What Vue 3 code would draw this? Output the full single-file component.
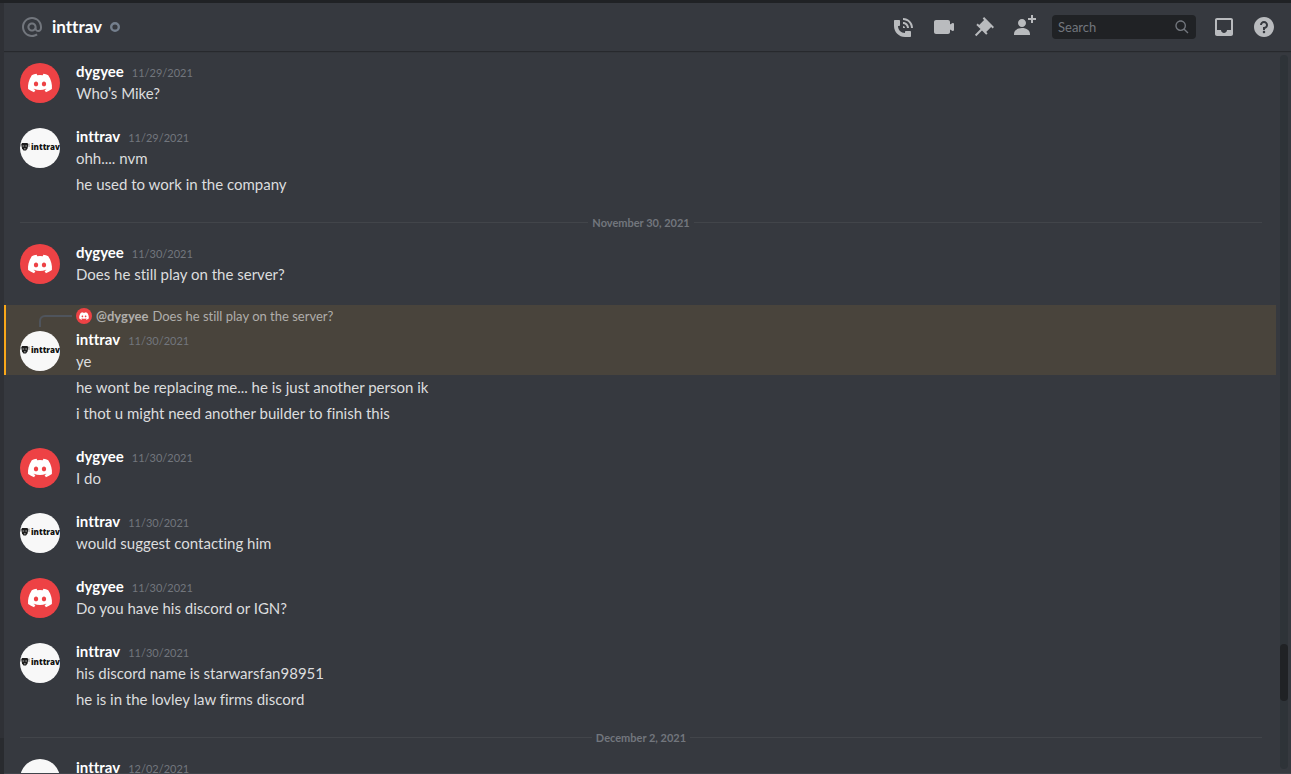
<template>
  <div class="chat">
    <aside class="sidebar-edge"></aside>
    <main class="channel">
      <header class="channel-header">
        <svg class="icon at-icon" viewBox="0 0 24 24"><path :d="icons.at" /></svg>
        <h1>inttrav</h1>
        <svg class="status-offline" viewBox="0 0 10 10" role="img" aria-label="Offline">
          <circle cx="5" cy="5" r="3.8" />
        </svg>
        <div class="toolbar">
          <button
            v-for="action in actions"
            :key="action.icon"
            class="toolbar-btn"
            :aria-label="action.label"
          >
            <svg class="icon" viewBox="0 0 24 24"><path :d="icons[action.icon]" /></svg>
          </button>
          <div class="search">
            <input v-model="query" type="text" placeholder="Search" aria-label="Search" />
            <svg class="search-icon" viewBox="0 0 24 24"><path :d="icons.search" /></svg>
          </div>
          <button class="toolbar-btn" aria-label="Inbox">
            <svg class="icon" viewBox="0 0 24 24"><path :d="icons.inbox" /></svg>
          </button>
          <button class="toolbar-btn" aria-label="Help">
            <svg class="icon" viewBox="0 0 24 24"><path :d="icons.help" /></svg>
          </button>
        </div>
      </header>

      <div class="scroller">
        <div class="messages">
          <template v-for="item in items" :key="item.id">
            <div v-if="item.divider" class="divider">
              <span>{{ item.divider }}</span>
            </div>
            <article v-else class="group">
              <div class="message" :class="{ mentioned: item.reply }">
                <div v-if="item.reply" class="reply">
                  <span class="reply-spine"></span>
                  <svg class="reply-avatar" viewBox="0 0 40 40">
                    <circle cx="20" cy="20" r="20" fill="#ed4245" />
                    <path :d="icons.discord" fill="#fff" transform="translate(8 8)" />
                  </svg>
                  <span class="reply-author">@dygyee</span>
                  <span class="reply-text">{{ item.reply }}</span>
                </div>
                <div class="message-row">
                  <svg v-if="item.author === 'dygyee'" class="avatar" viewBox="0 0 40 40">
                    <circle cx="20" cy="20" r="20" fill="#ed4245" />
                    <path :d="icons.discord" fill="#fff" transform="translate(8 8)" />
                  </svg>
                  <svg v-else class="avatar" viewBox="0 0 40 40">
                    <circle cx="20" cy="20" r="20" fill="#f8f8f8" />
                    <path d="M2 15h5.5l.8 1.5-.8 4L6 22.5H3.5L2 20.5l-.7-4z" fill="#1c1c1c" />
                    <path d="M2.5 18h1.7M5.3 18H7M4 20.8h1.6" stroke="#ccc" stroke-width=".8" />
                    <path d="M.8 16v2.5M9 15.5v3.5" stroke="#777" stroke-width=".8" />
                    <text x="11" y="22" class="avatar-text">inttrav</text>
                  </svg>
                  <div class="body">
                    <h2>
                      <span class="author">{{ item.author }}</span>
                      <time>{{ item.date }}</time>
                    </h2>
                    <p>{{ item.lines[0] }}</p>
                  </div>
                </div>
              </div>
              <div v-for="line in item.lines.slice(1)" :key="line" class="message follow">
                <p>{{ line }}</p>
              </div>
            </article>
          </template>
        </div>
        <div class="scrollbar"><div class="thumb"></div></div>
      </div>
    </main>
  </div>
</template>

<script setup>
import { ref } from 'vue'

const query = ref('')

const actions = [
  { icon: 'call', label: 'Start Voice Call' },
  { icon: 'video', label: 'Start Video Call' },
  { icon: 'pin', label: 'Pinned Messages' },
  { icon: 'addFriend', label: 'Add Friends to DM' }
]

const items = ref([
  { id: 1, author: 'dygyee', date: '11/29/2021', lines: ['Who’s Mike?'] },
  { id: 2, author: 'inttrav', date: '11/29/2021', lines: ['ohh.... nvm', 'he used to work in the company'] },
  { id: 3, divider: 'November 30, 2021' },
  { id: 4, author: 'dygyee', date: '11/30/2021', lines: ['Does he still play on the server?'] },
  {
    id: 5,
    author: 'inttrav',
    date: '11/30/2021',
    reply: 'Does he still play on the server?',
    lines: [
      'ye',
      'he wont be replacing me... he is just another person ik',
      'i thot u might need another builder to finish this'
    ]
  },
  { id: 6, author: 'dygyee', date: '11/30/2021', lines: ['I do'] },
  { id: 7, author: 'inttrav', date: '11/30/2021', lines: ['would suggest contacting him'] },
  { id: 8, author: 'dygyee', date: '11/30/2021', lines: ['Do you have his discord or IGN?'] },
  {
    id: 9,
    author: 'inttrav',
    date: '11/30/2021',
    lines: ['his discord name is starwarsfan98951', 'he is in the lovley law firms discord']
  },
  { id: 10, divider: 'December 2, 2021' },
  { id: 11, author: 'inttrav', date: '12/02/2021', lines: [''] }
])

const icons = {
  at: 'M12 2C6.486 2 2 6.486 2 12C2 17.515 6.486 22 12 22C14.039 22 15.993 21.398 17.652 20.259L16.521 18.611C15.195 19.519 13.633 20 12 20C7.589 20 4 16.411 4 12C4 7.589 7.589 4 12 4C16.411 4 20 7.589 20 12V12.782C20 14.17 19.402 15 18.4 15L18.398 15.018C18.338 15.005 18.273 15 18.209 15H18C17.437 15 16.6 14.182 16.6 13.631V12C16.6 9.464 14.537 7.4 12 7.4C9.463 7.4 7.4 9.463 7.4 12C7.4 14.537 9.463 16.6 12 16.6C13.234 16.6 14.35 16.106 15.177 15.313C15.826 16.269 16.93 17 18 17L18.002 16.981C18.064 16.994 18.129 17 18.195 17H18.4C20.552 17 22 15.306 22 12.782V12C22 6.486 17.514 2 12 2ZM12 14.599C10.566 14.599 9.4 13.433 9.4 11.999C9.4 10.565 10.566 9.399 12 9.399C13.434 9.399 14.6 10.565 14.6 11.999C14.6 13.433 13.434 14.599 12 14.599Z',
  call: 'M11 5V3C16.515 3 21 7.486 21 13H19C19 8.589 15.411 5 11 5ZM17 13H15C15 10.795 13.206 9 11 9V7C14.309 7 17 9.691 17 13ZM11 11V13H13C13 11.896 12.105 11 11 11ZM14 16H18C18.553 16 19 16.447 19 17V21C19 21.553 18.553 22 18 22H13C6.925 22 2 17.075 2 11V6C2 5.447 2.448 5 3 5H7C7.553 5 8 5.447 8 6V10C8 10.553 7.553 11 7 11H6C6.063 14.938 9 18 13 18V17C13 16.447 13.447 16 14 16Z',
  video: 'M21.526 8.149C21.231 7.966 20.862 7.951 20.553 8.105L18 9.382V7C18 5.897 17.103 5 16 5H4C2.897 5 2 5.897 2 7V17C2 18.104 2.897 19 4 19H16C17.103 19 18 18.104 18 17V14.618L20.553 15.894C20.694 15.965 20.847 16 21 16C21.183 16 21.365 15.949 21.526 15.851C21.82 15.668 22 15.347 22 15V9C22 8.653 21.82 8.332 21.526 8.149Z',
  pin: 'M22 12L12.101 2.101L10.686 3.514L12.101 4.929L7.151 9.878V9.88L5.736 8.465L4.322 9.88L8.565 14.122L2.908 19.778L4.322 21.192L9.979 15.536L14.222 19.778L15.636 18.364L14.222 16.95L19.171 12H19.172L20.586 13.414L22 12Z',
  addFriend: 'M21 3H24V5H21V8H19V5H16V3H19V0H21V3ZM10 12C12.205 12 14 10.205 14 8C14 5.795 12.205 4 10 4C7.795 4 6 5.795 6 8C6 10.205 7.795 12 10 12ZM10 13C5.289 13 2 15.467 2 19V20H18V19C18 15.467 14.711 13 10 13Z',
  search: 'M21.707 20.293L16.314 14.9C17.403 13.504 18 11.799 18 10C18 7.863 17.167 5.854 15.656 4.344C14.146 2.832 12.137 2 10 2C7.863 2 5.854 2.832 4.344 4.344C2.833 5.854 2 7.863 2 10C2 12.137 2.833 14.146 4.344 15.656C5.854 17.168 7.863 18 10 18C11.799 18 13.504 17.404 14.9 16.314L20.293 21.706L21.707 20.293ZM10 16C8.397 16 6.891 15.376 5.758 14.243C4.624 13.11 4 11.603 4 10C4 8.398 4.624 6.891 5.758 5.758C6.891 4.624 8.397 4 10 4C11.603 4 13.109 4.624 14.242 5.758C15.376 6.891 16 8.398 16 10C16 11.603 15.376 13.11 14.242 14.243C13.109 15.376 11.603 16 10 16Z',
  inbox: 'M19 3H4.99C3.88 3 3.01 3.89 3.01 5L3 19C3 20.1 3.88 21 4.99 21H19C20.1 21 21 20.1 21 19V5C21 3.89 20.1 3 19 3ZM19 15H15C15 16.66 13.65 18 12 18C10.35 18 9 16.66 9 15H4.99V5H19V15Z',
  help: 'M12 2C6.486 2 2 6.487 2 12C2 17.515 6.486 22 12 22C17.514 22 22 17.515 22 12C22 6.487 17.514 2 12 2ZM12 18.25C11.31 18.25 10.75 17.691 10.75 17C10.75 16.31 11.31 15.75 12 15.75C12.69 15.75 13.25 16.31 13.25 17C13.25 17.691 12.69 18.25 12 18.25ZM13 13.875V15H11V12H12C13.104 12 14 11.103 14 10C14 8.896 13.104 8 12 8C10.896 8 10 8.896 10 10H8C8 7.795 9.795 6 12 6C14.205 6 16 7.795 16 10C16 11.861 14.723 13.429 13 13.875Z',
  discord: 'M20.317 4.37a19.791 19.791 0 0 0-4.885-1.515.074.074 0 0 0-.079.037c-.21.375-.444.864-.608 1.25a18.27 18.27 0 0 0-5.487 0 12.64 12.64 0 0 0-.617-1.25.077.077 0 0 0-.079-.037A19.736 19.736 0 0 0 3.677 4.37a.07.07 0 0 0-.032.027C.533 9.046-.32 13.58.099 18.057a.082.082 0 0 0 .031.057 19.9 19.9 0 0 0 5.993 3.03.078.078 0 0 0 .084-.028 14.09 14.09 0 0 0 1.226-1.994.076.076 0 0 0-.041-.106 13.107 13.107 0 0 1-1.872-.892.077.077 0 0 1-.008-.128 10.2 10.2 0 0 0 .372-.292.074.074 0 0 1 .077-.01c3.928 1.793 8.18 1.793 12.062 0a.074.074 0 0 1 .078.01c.12.098.246.198.373.292a.077.077 0 0 1-.006.127 12.299 12.299 0 0 1-1.873.892.077.077 0 0 0-.041.107c.36.698.772 1.362 1.225 1.993a.076.076 0 0 0 .084.028 19.839 19.839 0 0 0 6.002-3.03.077.077 0 0 0 .032-.054c.5-5.177-.838-9.674-3.549-13.66a.061.061 0 0 0-.031-.03zM8.02 15.33c-1.183 0-2.157-1.085-2.157-2.419 0-1.333.956-2.419 2.157-2.419 1.21 0 2.176 1.096 2.157 2.42 0 1.333-.956 2.418-2.157 2.418zm7.975 0c-1.183 0-2.157-1.085-2.157-2.419 0-1.333.955-2.419 2.157-2.419 1.21 0 2.176 1.096 2.157 2.42 0 1.333-.946 2.418-2.157 2.418z'
}
</script>

<style>
body {
  background: #36393f;
}
</style>

<style scoped>
.chat {
  display: flex;
  height: 100vh;
  box-sizing: border-box;
  border-top: 3px solid #202225;
  background: #36393f;
  color: #dcddde;
  font-family: Lato, "Open Sans", sans-serif;
  font-size: 15px;
  font-variant-ligatures: none;
  line-height: 20px;
  overflow: hidden;
}

.sidebar-edge {
  flex: 0 0 4px;
  background: linear-gradient(to top, #292b2f 36px, #2f3136 36px);
}

.channel {
  flex: 1;
  min-width: 0;
  display: flex;
  flex-direction: column;
}

.channel-header {
  flex: 0 0 48px;
  display: flex;
  align-items: center;
  padding: 0 7px 0 16px;
  box-shadow: 0 1px 0 #27292d, 0 2px 0 #33363b;
}

.icon {
  display: block;
  width: 24px;
  height: 24px;
  fill: #b9bbbe;
}

.at-icon {
  fill: #72767d;
}

.channel-header h1 {
  margin: 0 8px;
  color: #fff;
  font-size: 17px;
  font-weight: 700;
  line-height: 20px;
}

.status-offline {
  width: 10px;
  height: 10px;
  fill: none;
  stroke: #747f8d;
  stroke-width: 2.4;
}

.toolbar {
  display: flex;
  align-items: center;
  margin-left: auto;
}

.toolbar-btn {
  margin: 0 8px;
  padding: 0;
  border: none;
  background: none;
  cursor: pointer;
}

.toolbar-btn:hover .icon {
  fill: #dcddde;
}

.search {
  display: flex;
  align-items: center;
  width: 144px;
  height: 24px;
  box-sizing: border-box;
  margin: 0 8px;
  padding: 0 6px;
  border-radius: 4px;
  background: #202225;
}

.search input {
  flex: 1;
  min-width: 0;
  padding: 0;
  border: none;
  outline: none;
  background: none;
  color: #dcddde;
  font-family: inherit;
  font-size: 13px;
}

.search input::placeholder {
  color: #72767d;
  opacity: 1;
}

.search-icon {
  width: 16px;
  height: 16px;
  fill: #72767d;
}

.scroller {
  flex: 1;
  min-height: 0;
  display: flex;
  gap: 4px;
  padding-right: 3px;
  border-bottom: 1px solid #40444b;
}

.messages {
  flex: 1;
  min-width: 0;
  padding-top: 8px;
  overflow: hidden;
}

.group {
  margin-bottom: 17px;
}

.message {
  padding: 2px 16px;
}

.mentioned {
  background: #49443c;
  box-shadow: inset 2px 0 0 #faa81a;
}

.message-row {
  display: flex;
  gap: 16px;
}

.avatar {
  flex: 0 0 40px;
  height: 40px;
  margin-top: 2px;
}

.avatar-text {
  fill: #111;
  font-family: "Open Sans", sans-serif;
  font-size: 8px;
  font-weight: 800;
}

.body {
  min-width: 0;
}

h2 {
  display: flex;
  align-items: baseline;
  gap: 8px;
  height: 22px;
  margin: 0;
  font-size: 15px;
  font-weight: 700;
  line-height: 20px;
}

.author {
  color: #fff;
}

time {
  color: #72767d;
  font-size: 11px;
  font-weight: 400;
  line-height: 13px;
}

p {
  min-height: 22px;
  margin: 0;
}

.follow {
  padding-left: 72px;
}

.reply {
  display: flex;
  align-items: center;
  height: 18px;
  margin-bottom: 4px;
  color: #b0aeab;
  font-size: 13px;
  line-height: 18px;
}

.reply-spine {
  align-self: flex-end;
  width: 31px;
  height: 10px;
  margin: 0 4px -2px 19px;
  border-top: 2px solid #4f545c;
  border-left: 2px solid #4f545c;
  border-top-left-radius: 6px;
}

.reply-avatar {
  width: 16px;
  height: 16px;
  margin-right: 4px;
}

.reply-author {
  margin-right: 4px;
  font-weight: 700;
}

.divider {
  display: flex;
  align-items: center;
  gap: 4px;
  height: 1px;
  margin: 24px 14px 17px 16px;
  color: #72767d;
  font-size: 11px;
  font-weight: 700;
  line-height: 13px;
}

.divider::before,
.divider::after {
  content: "";
  flex: 1;
  height: 1px;
  background: #42454a;
}

.scrollbar {
  display: flex;
  flex-direction: column;
  justify-content: flex-end;
  width: 8px;
  margin: 4px 0;
  border-radius: 4px;
  background: #2e3338;
}

.thumb {
  height: 8%;
  margin-bottom: 68px;
  border-radius: 4px;
  background: #202225;
}
</style>
